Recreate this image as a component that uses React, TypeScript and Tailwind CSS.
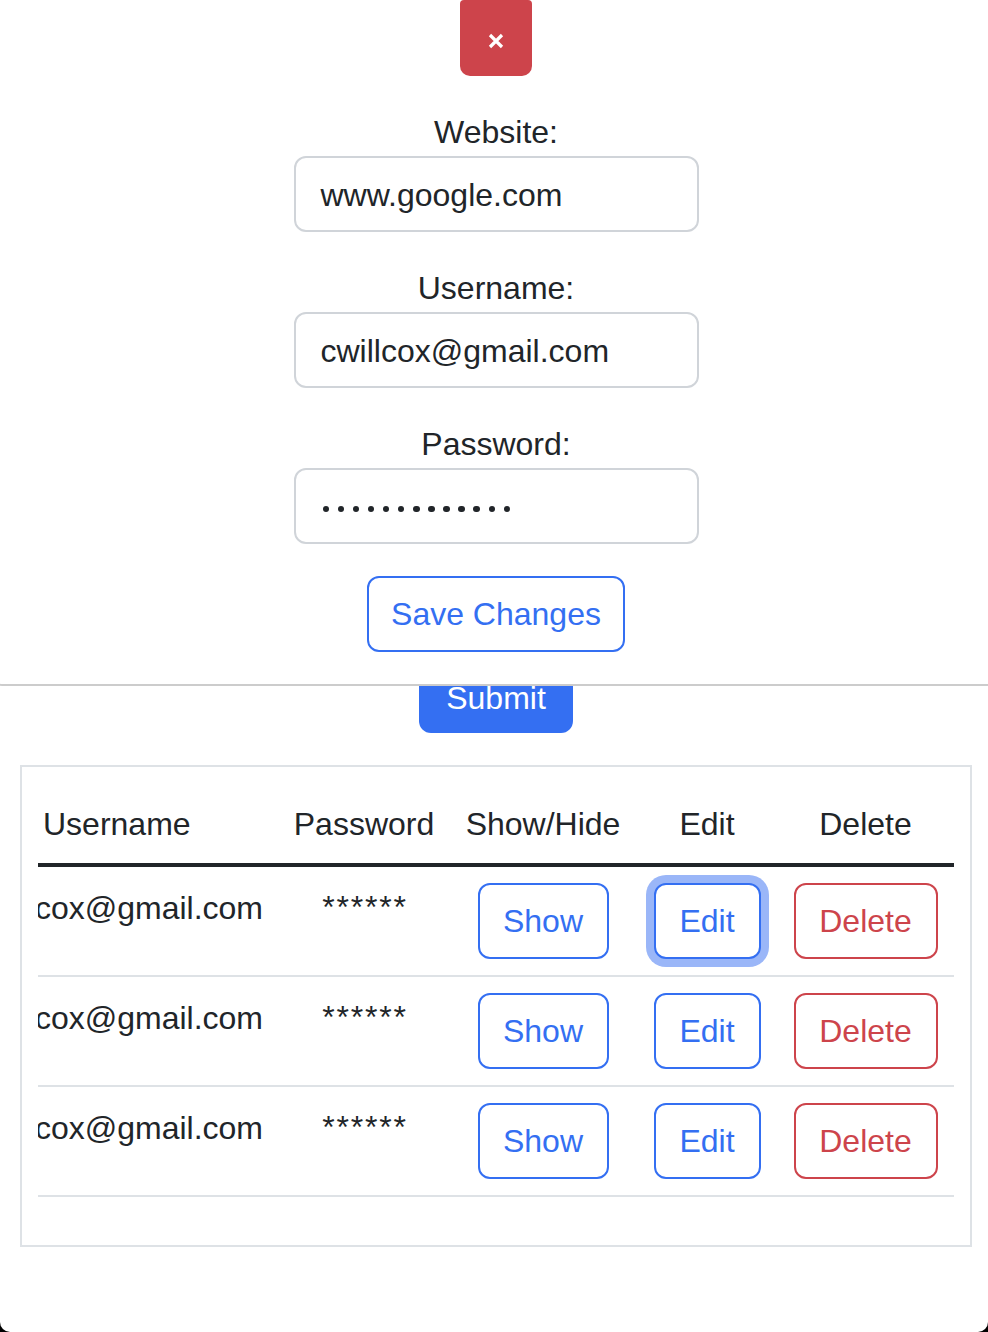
import React from "react";

function Dots() {
  return (
    <div className="flex items-center gap-[8.6px]">
      {Array.from({ length: 13 }).map((_, i) => (
        <span key={i} className="block w-[6.5px] h-[6.5px] rounded-full bg-[#212529]" />
      ))}
    </div>
  );
}

function Field({ label, children }: { label: string; children: React.ReactNode }) {
  return (
    <div className="flex flex-col items-center">
      <div className="text-[32px] leading-[48px] text-[#212529]">{label}</div>
      <div className="w-[405px] h-[76px] border-2 border-[#d0d4d9] rounded-[12px] flex items-center text-[32px] text-[#212529]">
        {children}
      </div>
    </div>
  );
}

function Row({ focused = false }: { focused?: boolean }) {
  return (
    <div className="grid grid-cols-[241px_170px_188px_140px_177px] border-b-2 border-[#dee2e6] h-[110px]">
      <div className="overflow-hidden flex justify-end pr-[16px] pt-[17px]">
        <span className="whitespace-nowrap text-[32px] leading-[48px] text-[#212529]">cwillcox@gmail.com</span>
      </div>
      <div className="pt-[16px] text-center pl-[2px]">
        <span className="text-[32px] leading-[48px] text-[#212529] tracking-[1.8px]">******</span>
      </div>
      <div className="pt-[16px] flex justify-center">
        <button className="w-[131px] h-[76px] border-2 border-[#346ff2] rounded-[12px] text-[32px] text-[#346ff2] bg-white">Show</button>
      </div>
      <div className="pt-[16px] flex justify-center">
        {focused ? (
          <button className="w-[107px] h-[76px] border-2 border-[#346ff2] rounded-[12px] text-[32px] text-[#346ff2] bg-white shadow-[0_0_0_8px_#9ab6f8]">Edit</button>
        ) : (
          <button className="w-[107px] h-[76px] border-2 border-[#346ff2] rounded-[12px] text-[32px] text-[#346ff2] bg-white">Edit</button>
        )}
      </div>
      <div className="pt-[16px] flex justify-center">
        <button className="w-[144px] h-[76px] border-2 border-[#cd444b] rounded-[12px] text-[32px] text-[#cd444b] bg-white">Delete</button>
      </div>
    </div>
  );
}

export default function App() {
  return (
    <div className="relative w-[988px] h-[1332px] overflow-hidden bg-black font-['Liberation_Sans',Arial,sans-serif]">
      <div className="h-full bg-white rounded-b-[10px]">
        {/* page under the modal */}
        <div className="h-[656px]" />
        <div className="flex justify-center pl-[4px]">
          <button className="w-[154px] h-[77px] rounded-[12px] bg-[#346ff2] text-white text-[32px] pt-[6px]">Submit</button>
        </div>
        <div className="mt-[32px] ml-[20px] w-[952px] border-2 border-[#dee2e6] p-[16px]">
          <div className="mb-[32px]">
            <div className="grid grid-cols-[241px_170px_188px_140px_177px] h-[84px] border-b-4 border-[#212529] text-[32px] leading-[48px] text-[#212529]">
              <div className="pt-[17px] pl-[5px]">Username</div>
              <div className="pt-[17px] text-center">Password</div>
              <div className="pt-[17px] text-center">Show/Hide</div>
              <div className="pt-[17px] text-center">Edit</div>
              <div className="pt-[17px] text-center">Delete</div>
            </div>
            <Row focused />
            <Row />
            <Row />
          </div>
        </div>
      </div>

      {/* modal */}
      <div className="absolute top-0 left-[-10px] right-[-14px] bg-white border-2 border-t-0 border-[#cccccc] rounded-b-[12px] flex flex-col items-center pb-[32px]">
        <button className="w-[72px] h-[76px] bg-[#cd444b] rounded-b-[10px] rounded-t-[4px] flex items-center justify-center pt-[6px]">
          <svg width="16" height="16" viewBox="0 0 16 16">
            <path d="M2 2 L14 14 M14 2 L2 14" stroke="white" strokeWidth="3.2" strokeLinecap="butt" />
          </svg>
        </button>
        <div className="mt-[32px] flex flex-col gap-[32px] items-center">
          <Field label="Website:">
            <span className="pl-[25px] pt-[2px]">www.google.com</span>
          </Field>
          <Field label="Username:">
            <span className="pl-[25px] pt-[2px]">cwillcox@gmail.com</span>
          </Field>
          <Field label="Password:">
            <div className="pl-[27px] pt-[6px]">
              <Dots />
            </div>
          </Field>
          <button className="w-[258px] h-[76px] border-2 border-[#346ff2] rounded-[12px] text-[32px] text-[#346ff2] bg-white">
            Save Changes
          </button>
        </div>
      </div>
    </div>
  );
}
